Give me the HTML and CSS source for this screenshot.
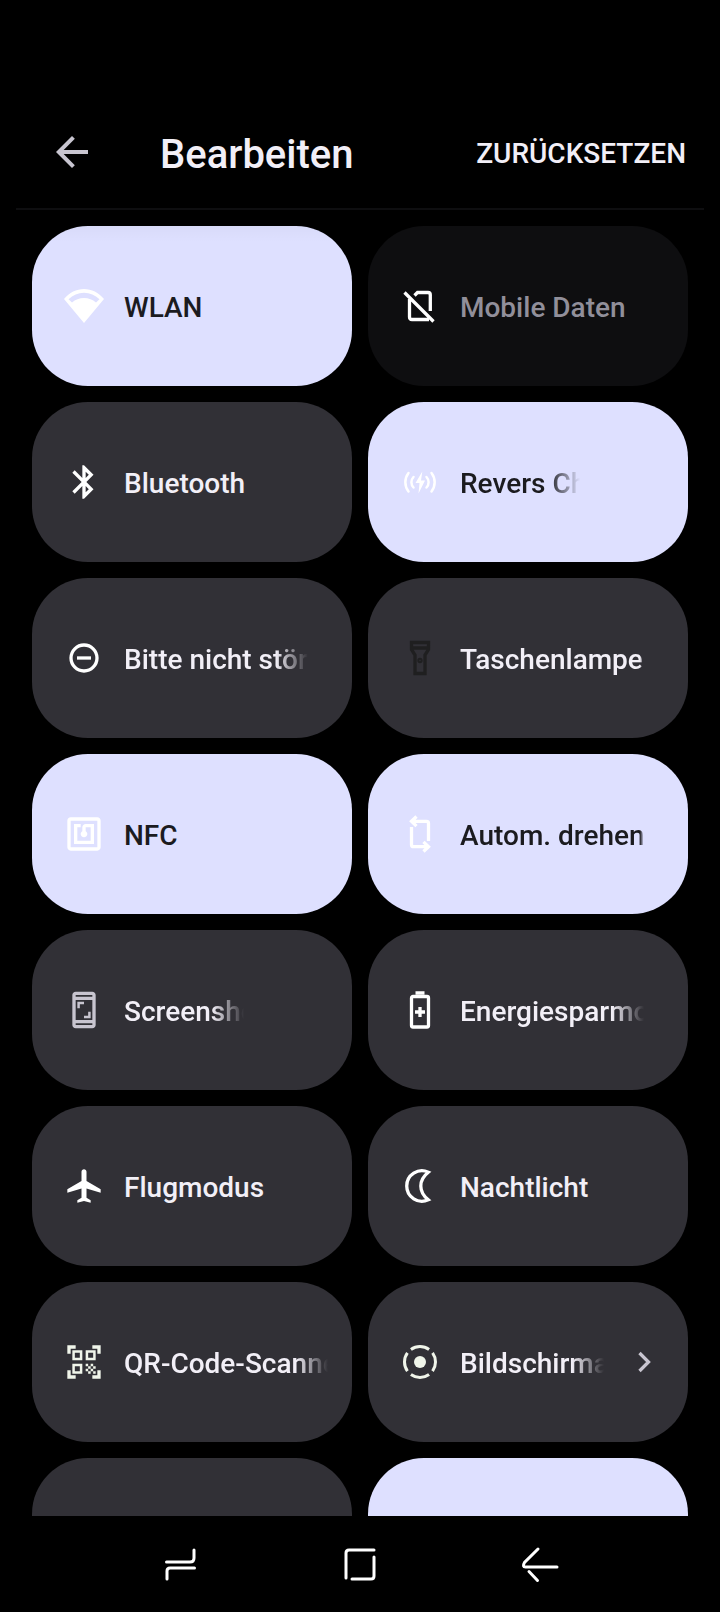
FILE: index.html
```html
<!DOCTYPE html>
<html lang="de">
<head>
  <meta charset="UTF-8" />
  <meta name="viewport" content="width=device-width, initial-scale=1.0" />
  <title>Bearbeiten</title>
  <link rel="stylesheet" href="styles.css">
</head>
<body>
  <header class="toolbar">
    <button class="icon-button">
      <svg class="back-icon" viewBox="0 0 24 24"><path d="M20 11H7.83l5.59-5.59L12 4l-8 8 8 8 1.41-1.41L7.83 13H20v-2z"/></svg>
    </button>
    <h1 class="title">Bearbeiten</h1>
    <button class="reset">ZURÜCKSETZEN</button>
  </header>

  <main class="panel">
    <div class="tiles">
      <button class="tile active">
        <svg class="icon" viewBox="0 0 40 40"><path fill-rule="evenodd" d="M20 37L0 13C5.3 6.4 12.5 3 20 3s14.7 3.4 20 10zM4.5 13.2L8 16.4C11.3 13.6 15.5 12 20 12s8.7 1.6 12 4.4l3.5-3.2C31 9 26 6.8 20 6.8S9 9 4.5 13.2z"/></svg>
        <span class="label">WLAN</span>
      </button>
      <button class="tile unavailable">
        <svg class="icon line" viewBox="0 0 40 40"><path d="M4.5 6.5L33.5 35.5M9.5 13V31q0 2.5 2.5 2.5h17M14.5 9.5l3-3H28q2.3 0 2.3 2.3V25"/></svg>
        <span class="label">Mobile Daten</span>
      </button>

      <button class="tile">
        <svg class="icon" viewBox="0 0 24 24"><path d="M17.71 7.71L12 2h-1v7.59L6.41 5 5 6.41 10.59 12 5 17.59 6.41 19 11 14.41V22h1l5.71-5.71-4.3-4.29 4.3-4.29zM13 5.83l1.88 1.88L13 9.59V5.83zm1.88 10.46L13 18.17v-3.76l1.88 1.88z"/></svg>
        <span class="label">Bluetooth</span>
      </button>
      <button class="tile active">
        <svg class="icon" viewBox="0 0 40 40">
          <path d="M22.3 9.5L15.5 21h4l-1 10.5L25 18.5h-4z"/>
          <path class="arc" d="M8.5 11C4.3 16.5 4.3 24 8.5 29.5M13.5 15C10.7 18 10.7 22.5 13.5 25.5M31.5 11C35.7 16.5 35.7 24 31.5 29.5M26.5 15C29.3 18 29.3 22.5 26.5 25.5"/>
        </svg>
        <span class="label short fade">Revers Charging</span>
      </button>

      <button class="tile">
        <svg class="icon line" viewBox="0 0 40 40"><circle cx="20" cy="20" r="13"/><path d="M13 20h14"/></svg>
        <span class="label fade">Bitte nicht stören</span>
      </button>
      <button class="tile">
        <svg class="icon line dark" viewBox="0 0 40 40">
          <path d="M11.5 4.5h17v7l-3.5 5.500v18.500H15V17l-3.500-5.500zM11.500 10h17"/>
          <circle cx="20" cy="22.5" r="1"/>
        </svg>
        <span class="label clip">Taschenlampe</span>
      </button>

      <button class="tile active">
        <svg class="icon" viewBox="0 0 24 24"><path d="M20 2H4c-1.1 0-2 .9-2 2v16c0 1.1.9 2 2 2h16c1.1 0 2-.9 2-2V4c0-1.1-.9-2-2-2zm0 18H4V4h16v16zM18 6h-5c-1.1 0-2 .9-2 2v2.28c-.6.35-1 .98-1 1.72 0 1.1.9 2 2 2s2-.9 2-2c0-.74-.4-1.38-1-1.72V8h3v8H8V8h2V6H6v12h12V6z"/></svg>
        <span class="label">NFC</span>
      </button>
      <button class="tile active">
        <svg class="icon line" viewBox="0 0 40 40"><path d="M28.5 27V9.3q0-2-2-2H13M16.5 2.5l-5 4.8 5 4.8M11.5 13v17.7q0 2 2 2H27M23.5 37.5l5-4.8-5-4.8"/></svg>
        <span class="label clip">Autom. drehen</span>
      </button>

      <button class="tile">
        <svg class="icon muted" viewBox="0 0 24 24"><path d="M17 1H7c-1.1 0-2 .9-2 2v18c0 1.1.9 2 2 2h10c1.1 0 2-.9 2-2V3c0-1.1-.9-2-2-2zm0 20H7v-1h10v1zm0-3H7V6h10v12zm0-14H7V3h10v1zM9.5 8.5H12V7H8v4h1.5V8.5zM12 17h4v-4h-1.5v2.5H12V17z"/></svg>
        <span class="label short fade">Screenshot</span>
      </button>
      <button class="tile">
        <svg class="icon line" viewBox="0 0 40 40"><rect x="11.5" y="6.5" width="17" height="30.5" rx="1.5"/><path d="M15.5 3h9M20 17v10M15 22h10"/></svg>
        <span class="label fade">Energiesparmodus</span>
      </button>

      <button class="tile">
        <svg class="icon" viewBox="0 0 24 24"><path d="M22 16v-2l-8.5-5V3.5c0-.83-.67-1.5-1.5-1.5s-1.5.67-1.5 1.5V9L2 14v2l8.5-2.5V19L8 20.5V22l4-1 4 1v-1.5L13.5 19v-5.5L22 16z"/></svg>
        <span class="label">Flugmodus</span>
      </button>
      <button class="tile">
        <svg class="icon line" viewBox="0 0 40 40"><path d="M28.3 6.2A15.2 15.2 0 1 0 28.3 33.8C23.5 30 20.8 25.5 20.8 20S23.5 10 28.3 6.2z"/></svg>
        <span class="label">Nachtlicht</span>
      </button>

      <button class="tile wide">
        <svg class="icon cream" viewBox="0 0 24 24"><path d="M9.5 6.5v3h-3v-3h3M11 5H5v6h6V5zm-1.5 9.5v3h-3v-3h3M11 13H5v6h6v-6zm6.5-6.5v3h-3v-3h3M19 5h-6v6h6V5zm-6 8h1.5v1.5H13V13zm1.5 1.5H16V16h-1.5v-1.5zM16 13h1.5v1.5H16V13zm-3 3h1.5v1.5H13V16zm1.5 1.5H16V19h-1.5v-1.5zM16 16h1.5v1.5H16V16zm1.5-1.5H19V16h-1.5v-1.5zm0 3H19V19h-1.5v-1.5zM22 7h-2V4h-3V2h5v5zm0 15v-5h-2v3h-3v2h5zM2 22h5v-2H4v-3H2v5zM2 2v5h2V4h3V2H2z"/></svg>
        <span class="label fade">QR-Code-Scanner</span>
      </button>
      <button class="tile wide">
        <svg class="icon cream" viewBox="0 0 40 40">
          <circle cx="20" cy="20" r="6"/>
          <circle class="ring" cx="20" cy="20" r="15.5" pathLength="360"/>
        </svg>
        <span class="label fade">Bildschirmaufnahme</span>
        <svg class="icon line muted" viewBox="0 0 40 40"><path d="M15.5 11l9 9-9 9"/></svg>
      </button>

      <button class="tile"></button>
      <button class="tile active"></button>
    </div>
  </main>

  <!-- System navigation -->
  <nav class="navbar">
    <button class="icon-button"><svg class="icon nav" viewBox="0 0 40 40"><path d="M34 6v8q0 4-4 4H6.5M34.5 24H10q-3 0-3 3v8"/></svg></button>
    <button class="icon-button"><svg class="icon nav" viewBox="0 0 40 40"><path d="M6 34V9q0-3 3-3h25M34 13v19q0 3-3 3H12"/></svg></button>
    <button class="icon-button"><svg class="icon nav" viewBox="0 0 40 40"><path d="M18 5L4.5 18.5q-2.5 4.5 1 4.5H37M9 27.5l8.5 9"/></svg></button>
  </nav>
</body>
</html>
```
FILE: styles.css
```css
* {
  box-sizing: border-box;
}
body {
  display: flex;
  flex-direction: column;
  height: 100vh;
  margin: 0;
  padding-top: 96px; /* status bar */
  background: #000;
  color: #f2eff7;
  font-family: Roboto, "Liberation Sans", sans-serif;
}
button {
  margin: 0;
  padding: 0;
  border: none;
  background: none;
  color: inherit;
  font: inherit;
  cursor: pointer;
}
svg {
  display: block;
  flex: none;
  fill: currentColor;
}

/* Toolbar */
.toolbar {
  display: flex;
  flex: none;
  align-items: center;
  height: 114px;
  margin: 0 16px;
  padding: 0 18px 0 32px;
  border-bottom: 2px solid #0e0e10;
}
.back-icon {
  width: 48px;
  height: 48px;
  color: #c8c5d0;
}
.title {
  flex: 1;
  margin: 0;
  padding: 4px 0 0 64px;
  font-size: 40px;
  font-weight: 500;
}
.reset {
  padding-top: 2px;
  font-size: 28px;
  font-weight: 500;
}

/* Quick settings tiles */
.panel {
  position: relative;
  flex: 1;
  min-height: 0;
  overflow: hidden;
}
.panel::before {
  content: "";
  position: absolute;
  top: 0;
  left: 0;
  right: 0;
  height: 32px;
  background: linear-gradient(rgba(0, 0, 0, 0.05), transparent);
}
.tiles {
  display: grid;
  grid-template-columns: 1fr 1fr;
  grid-auto-rows: 160px;
  gap: 16px;
  padding: 16px 32px;
}
.tile {
  display: flex;
  align-items: center;
  gap: 20px;
  min-width: 0;
  padding: 0 44px 0 32px;
  border-radius: 56px;
  background: #313036;
  font-size: 28px;
  font-weight: 500;
  text-align: left;
}
.tile.wide {
  padding-right: 24px;
}
.tile.active {
  background: #dee0ff;
  color: #1b1b1f;
}
.tile.unavailable {
  background: #0e0e10;
  color: #918f9a;
}
.label {
  flex: 1;
  min-width: 0;
  padding-top: 2px;
  overflow: hidden;
  white-space: nowrap;
}
.label.short {
  flex: none;
  width: 120px;
}
.label.fade {
  mask-image: linear-gradient(to left, transparent, #000 32px);
}
.label.clip {
  mask-image: linear-gradient(to left, transparent, #000 4px);
}

/* Icons */
.icon {
  width: 40px;
  height: 40px;
  color: #fff;
}
.icon.muted {
  color: #c8c5d0;
}
.icon.dark {
  color: #1f1f20;
}
.icon.cream {
  color: #f0f5ea;
}
.icon.line {
  fill: none;
  stroke: currentColor;
  stroke-width: 3.3;
}
.arc,
.ring {
  fill: none;
  stroke: currentColor;
  stroke-width: 3;
}
.arc {
  stroke-width: 2.5;
  stroke-linecap: round;
}
.ring {
  stroke-dasharray: 72 18;
  stroke-dashoffset: 36;
}

/* Navigation bar */
.navbar {
  display: grid;
  flex: none;
  grid-template-columns: repeat(3, 1fr);
  height: 96px;
  padding: 0 12.5%;
}
.navbar .icon-button {
  display: flex;
  align-items: center;
  justify-content: center;
}
.icon.nav {
  fill: none;
  stroke: currentColor;
  stroke-width: 3;
  stroke-linecap: round;
}
```
